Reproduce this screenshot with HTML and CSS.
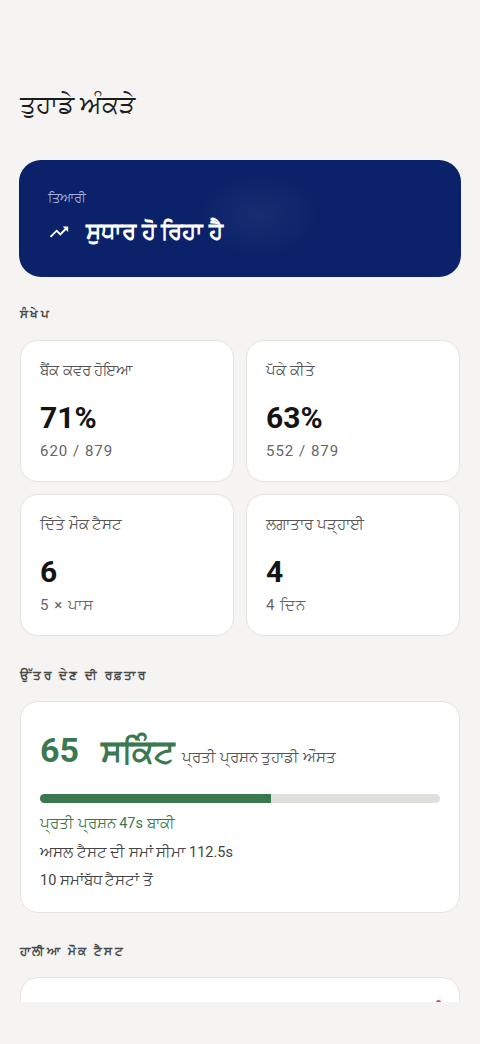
FILE: index.html
```html
<!DOCTYPE html>
<html lang="pa">
<head>
    <meta charset="UTF-8">
    <meta name="viewport" content="width=device-width, initial-scale=1.0">
    <title>ਤੁਹਾਡੇ ਅੰਕੜੇ</title>
    <link rel="stylesheet" href="styles.css">
</head>
<body>
    <div class="screen">
        <main class="content">
            <h1 class="page-title">ਤੁਹਾਡੇ ਅੰਕੜੇ</h1>

            <!-- Readiness hero -->
            <section class="hero">
                <div class="hero-label">ਤਿਆਰੀ</div>
                <div class="hero-status">
                    <svg class="trend-icon" viewBox="0 0 24 24" width="22" height="22" fill="currentColor">
                        <path d="M16 6l2.29 2.29-4.88 4.88-4-4L2 16.59 3.41 18l6-6 4 4 6.3-6.29L22 12V6z"/>
                    </svg>
                    <span>ਸੁਧਾਰ ਹੋ ਰਿਹਾ ਹੈ</span>
                </div>
            </section>

            <!-- Summary -->
            <h2 class="section-title">ਸੰਖੇਪ</h2>
            <div class="stat-grid">
                <div class="stat-card">
                    <div class="stat-label">ਬੈਂਕ ਕਵਰ ਹੋਇਆ</div>
                    <div class="stat-value">71%</div>
                    <div class="stat-sub">620 / 879</div>
                </div>
                <div class="stat-card">
                    <div class="stat-label">ਪੱਕੇ ਕੀਤੇ</div>
                    <div class="stat-value">63%</div>
                    <div class="stat-sub">552 / 879</div>
                </div>
                <div class="stat-card">
                    <div class="stat-label">ਦਿੱਤੇ ਮੌਕ ਟੈਸਟ</div>
                    <div class="stat-value">6</div>
                    <div class="stat-sub">5 × ਪਾਸ</div>
                </div>
                <div class="stat-card">
                    <div class="stat-label">ਲਗਾਤਾਰ ਪੜ੍ਹਾਈ</div>
                    <div class="stat-value">4</div>
                    <div class="stat-sub">4 ਦਿਨ</div>
                </div>
            </div>

            <!-- Answer speed -->
            <h2 class="section-title">ਉੱਤਰ ਦੇਣ ਦੀ ਰਫ਼ਤਾਰ</h2>
            <div class="card speed-card">
                <div class="speed-head">
                    <span class="speed-value">65</span>
                    <span class="speed-value unit">ਸਕਿੰਟ</span>
                    <span class="speed-caption">ਪ੍ਰਤੀ ਪ੍ਰਸ਼ਨ ਤੁਹਾਡੀ ਔਸਤ</span>
                </div>
                <div class="progress">
                    <div class="progress-fill" style="width: 57.8%"></div>
                </div>
                <div class="speed-note good">ਪ੍ਰਤੀ ਪ੍ਰਸ਼ਨ 47s ਬਾਕੀ</div>
                <div class="speed-note">ਅਸਲ ਟੈਸਟ ਦੀ ਸਮਾਂ ਸੀਮਾ 112.5s</div>
                <div class="speed-note">10 ਸਮਾਂਬੱਧ ਟੈਸਟਾਂ ਤੋਂ</div>
            </div>

            <!-- Recent mock tests -->
            <h2 class="section-title">ਹਾਲੀਆ ਮੌਕ ਟੈਸਟ</h2>
            <div class="card recent-card">
                <span class="fail-dot"></span>
            </div>
        </main>
    </div>
</body>
</html>
```

FILE: styles.css
```css
/* Base */
* {
    box-sizing: border-box;
}

body {
    margin: 0;
    background: #f5f4f2;
    font-family: Roboto, "Noto Sans", sans-serif;
    color: #1b1b1b;
}

.screen {
    height: 1002px;
    overflow: hidden;
}

.content {
    padding: 88px 20px 40px;
}

.page-title {
    margin: 0 0 38px;
    font-size: 25px;
    font-weight: 500;
    line-height: 34px;
    color: #1c1c1c;
}

/* Hero */
.hero {
    margin: 0 -1px;
    height: 117px;
    padding: 30px 29px 0;
    border-radius: 22px;
    background: radial-gradient(ellipse 60px 42px at 240px 55px, rgba(255, 255, 255, 0.05), rgba(255, 255, 255, 0) 100%), #0b226a;
    color: #fff;
}

.hero-label {
    font-size: 12.5px;
    line-height: 16px;
    color: #a3b2de;
}

.hero-status {
    display: flex;
    align-items: center;
    gap: 16px;
    margin-top: 11px;
    font-size: 23px;
    font-weight: 700;
    line-height: 30px;
}

.trend-icon {
    flex-shrink: 0;
}

/* Section titles */
.section-title {
    margin: 28px 0 17px;
    font-size: 12px;
    font-weight: 700;
    letter-spacing: 2.4px;
    line-height: 18px;
    color: #4a4a4a;
}

/* Cards */
.card,
.stat-card {
    background: #fff;
    border: 1px solid #e6e4df;
    border-radius: 18px;
}

.stat-grid {
    display: grid;
    grid-template-columns: 1fr 1fr;
    gap: 12px;
}

.stat-card {
    height: 142px;
    padding: 20px 19px;
}

.stat-label {
    font-size: 14.5px;
    line-height: 20px;
    color: #555;
}

.stat-value {
    margin-top: 20px;
    font-size: 30px;
    font-weight: 700;
    line-height: 34px;
    color: #141414;
}

.stat-sub {
    margin-top: 6px;
    font-size: 15px;
    line-height: 20px;
    letter-spacing: 1px;
    color: #666;
}

.stat-grid + .section-title {
    margin-top: 30px;
}

.speed-card + .section-title {
    margin-top: 29px;
}

/* Speed */
.speed-card {
    padding: 28px 19px 16px;
}

.speed-head {
    display: flex;
    align-items: baseline;
}

.speed-value {
    margin-right: 22px;
    font-size: 34px;
    font-weight: 700;
    line-height: 40px;
    color: #3b7850;
}

.speed-value.unit {
    margin-right: 7px;
    font-size: 32px;
}

.speed-caption {
    font-size: 14.5px;
    color: #555;
}

.progress {
    height: 9px;
    margin: 23px 0 7px;
    border-radius: 5px;
    background: #e0dfda;
    overflow: hidden;
}

.progress-fill {
    height: 100%;
    background: #3b7850;
}

.speed-note {
    font-size: 14.5px;
    line-height: 28.5px;
    color: #444;
}

.speed-note.good {
    color: #3b7850;
}

.recent-card {
    position: relative;
    height: 90px;
}

.fail-dot {
    position: absolute;
    top: 22px;
    right: 18px;
    width: 5px;
    height: 5px;
    border-radius: 50%;
    background: #d9485f;
}
```
